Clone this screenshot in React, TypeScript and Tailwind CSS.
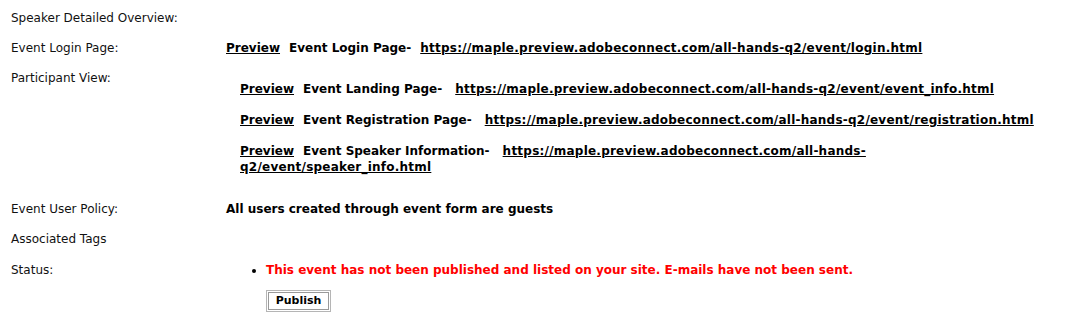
const font = { fontFamily: '"DejaVu Sans", Verdana, sans-serif' };

const participantLinks = [
  { label: 'Event Landing Page-', url: 'https://maple.preview.adobeconnect.com/all-hands-q2/event/event_info.html' },
  { label: 'Event Registration Page-', url: 'https://maple.preview.adobeconnect.com/all-hands-q2/event/registration.html' },
  { label: 'Event Speaker Information-', url: 'https://maple.preview.adobeconnect.com/all-hands-q2/event/speaker_info.html' },
];

function Row({ label, children }: { label: string; children?: React.ReactNode }) {
  return (
    <div className="flex py-[7px]">
      <div className="w-[215px] shrink-0">{label}</div>
      <div className="flex-1">{children}</div>
    </div>
  );
}

export default function App() {
  return (
    <div
      className="w-[1073px] h-[325px] bg-white text-[12px] leading-[16px] text-[#111] pt-[3px] pl-[11px] pr-[30px] overflow-hidden"
      style={font}
    >
      <Row label="Speaker Detailed Overview:" />

      {/* Login page */}
      <Row label="Event Login Page:">
        <div className="font-bold text-black">
          <a className="underline">Preview</a>
          <span className="ml-[9px] mr-[9px]">Event Login Page-</span>
          <a className="underline tracking-[0.25px]">https://maple.preview.adobeconnect.com/all-hands-q2/event/login.html</a>
        </div>
      </Row>

      {/* Participant view */}
      <div className="flex pt-[7px] pb-[19px]">
        <div className="w-[215px] shrink-0">Participant View:</div>
        <div className="flex-1 pl-[14px] pt-[11px] flex flex-col gap-[15px] font-bold text-black">
          {participantLinks.map((l) => (
            <div key={l.label}>
              <a className="underline">Preview</a>
              <span className="ml-[9px] mr-[13px]">{l.label}</span>
              <a className="underline tracking-[0.23px]">{l.url}</a>
            </div>
          ))}
        </div>
      </div>

      <Row label="Event User Policy:">
        <span className="font-bold text-black">All users created through event form are guests</span>
      </Row>
      <Row label="Associated Tags" />

      {/* Status */}
      <div className="flex pt-[8px]">
        <div className="w-[215px] shrink-0">Status:</div>
        <div className="flex-1 pl-[27px]">
          <ul className="list-disc pl-[13px]">
            <li className="font-bold text-[#ff0000] marker:text-black">
              This event has not been published and listed on your site. E-mails have not been sent.
            </li>
          </ul>
          <button className="block ml-[13px] mt-[12px] h-[22px] w-[65px] border border-[#b5b5b5] bg-white font-bold text-[11px] text-black shadow-[inset_0_0_0_1px_#fff,inset_0_0_0_2px_#9a9a9a]">
            Publish
          </button>
        </div>
      </div>
    </div>
  );
}
